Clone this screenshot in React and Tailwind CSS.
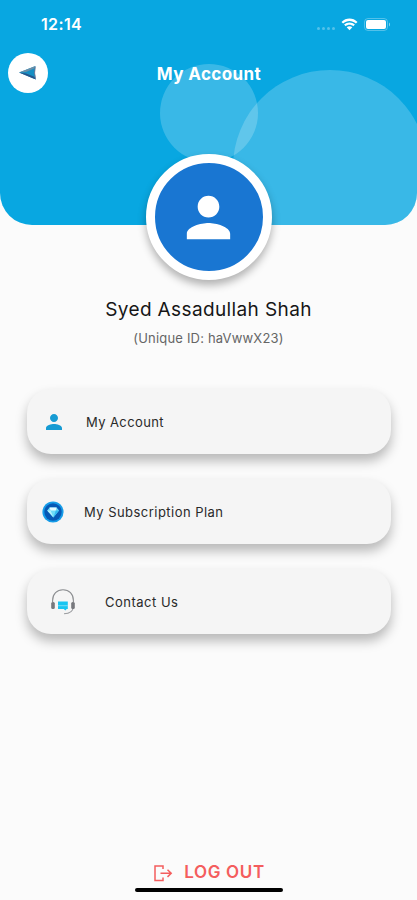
import React from "react";
import { MdPerson } from "react-icons/md";

function SignalDots() {
  return (
    <div className="flex gap-[2px] opacity-30">
      <span className="h-[3px] w-[3px] rounded-full bg-white" />
      <span className="h-[3px] w-[3px] rounded-full bg-white" />
      <span className="h-[3px] w-[3px] rounded-full bg-white" />
      <span className="h-[3px] w-[3px] rounded-full bg-white" />
    </div>
  );
}

function WifiIcon() {
  return (
    <svg width="17" height="13" viewBox="0 0 17 13" fill="white">
      <path d="M0.5 3.9C5 -0.6 12 -0.6 16.5 3.9L14.9 5.5C11.3 2 5.7 2 2.1 5.5Z" />
      <path d="M3.1 6.6C6.1 3.7 10.9 3.7 13.9 6.6L12.3 8.2C10.2 6.2 6.8 6.2 4.7 8.2Z" />
      <path d="M5.7 9.2C7.3 7.8 9.7 7.8 11.3 9.2L8.5 12.3Z" />
    </svg>
  );
}

function BatteryIcon() {
  return (
    <svg width="27" height="13" viewBox="0 0 27 13">
      <rect x="0.5" y="0.5" width="23" height="12" rx="3.5" fill="none" stroke="white" strokeOpacity="0.3" />
      <rect x="2" y="2" width="20" height="9" rx="2" fill="white" />
      <path d="M25 4.5C26.4 5 26.4 8 25 8.5Z" fill="white" fillOpacity="0.5" />
    </svg>
  );
}

function BackArrowIcon() {
  return (
    <svg width="20" height="16" viewBox="0 0 20 16">
      <path d="M1 7.5L17.5 1L16.8 8L17.8 14.5Z" fill="#168fc4" />
      <path d="M1 7.5L17.5 1L16.2 3.5L8 7Z" fill="#6b8fa8" />
      <path d="M1 7.5L17.8 14.5L16.4 11.8L8 8.5Z" fill="#28558a" />
      <path d="M17.2 2L16.6 8L17.5 13.5" fill="none" stroke="#7b718e" strokeWidth="0.8" />
    </svg>
  );
}

function DiamondIcon() {
  return (
    <svg width="22" height="22" viewBox="0 0 22 22">
      <circle cx="11" cy="11" r="10.6" fill="#159ce8" />
      <circle cx="11" cy="11" r="8.7" fill="#0759b5" />
      <path d="M7.6 6.5H14.6L17 9.6L11.4 16.6L5.2 9.6Z" fill="#6edcf8" />
      <path d="M7.6 6.5H14.6L13.8 9.6H8.6Z" fill="#e6fbff" />
      <path d="M5.2 9.6H8.6L11.4 16.6Z" fill="#b5f1fc" />
      <path d="M17 9.6H13.8L11.4 16.6Z" fill="#33baf0" />
    </svg>
  );
}

function HeadsetIcon() {
  return (
    <svg width="26" height="28" viewBox="0 0 26 28" fill="none">
      <path d="M2.6 14V12.5C2.6 6 7 1.8 13 1.8S23.4 6 23.4 12.5V14" stroke="#8b8d90" strokeWidth="1.1" />
      <path d="M23.2 19C23 23 20 25.6 14 25.8" stroke="#9b9da0" strokeWidth="1.1" />
      <rect x="1.2" y="14" width="3.6" height="7" rx="1.5" fill="#77787d" />
      <rect x="21.2" y="14" width="3.6" height="7" rx="1.5" fill="#77787d" />
      <path d="M8 13.5H17.8V21H16.7L15.3 22.5L13.8 21H8Z" fill="#18c5f2" />
      <path d="M8 17.7H18" stroke="#77dcf5" strokeWidth="1" />
    </svg>
  );
}

function LogoutIcon() {
  return (
    <svg width="19" height="17" viewBox="0 0 19 17" fill="none" stroke="#f45d5d" strokeWidth="1.5">
      <path d="M9 4V1H1V15.5H9V12.5" />
      <path d="M6.5 8.3H17M13.5 4.7L17.2 8.3L13.5 11.9" />
    </svg>
  );
}

const menuItems = [
  {
    label: "My Account",
    icon: <MdPerson className="mt-px h-6 w-6 text-[#169bd3]" />,
    className: "gap-5 pl-[15px]",
    textClass: "tracking-[0.4px]",
  },
  {
    label: "My Subscription Plan",
    icon: <DiamondIcon />,
    className: "gap-5 pl-[15px]",
    textClass: "tracking-[0.46px]",
  },
  {
    label: "Contact Us",
    icon: <HeadsetIcon />,
    className: "gap-[29px] pl-[23px]",
    textClass: "tracking-[0.5px]",
  },
];

export default function App() {
  return (
    <div className="relative flex h-[900px] w-full flex-col overflow-hidden bg-[#fbfbfb] font-['Inter',sans-serif]">
      {/* Header */}
      <header className="relative h-[225px] shrink-0 overflow-hidden rounded-b-[32px] bg-[#08a7e1]">
        <div className="absolute left-[160px] top-16 h-[98px] w-[98px] rounded-full bg-white/20" />
        <div className="absolute left-[233px] top-[70px] h-[194px] w-[194px] rounded-full bg-white/20" />

        <div className="relative flex h-12 items-center justify-between pl-[41px] pr-[26px]">
          <span className="text-base font-semibold tracking-[0.35px] text-white">12:14</span>
          <div className="flex items-center">
            <div className="mr-[6px] mt-[9px]">
              <SignalDots />
            </div>
            <WifiIcon />
            <div className="ml-[6px]">
              <BatteryIcon />
            </div>
          </div>
        </div>

        <div className="relative mt-[5px] grid h-10 grid-cols-[40px_1fr_40px] items-center px-2">
          <button className="flex h-10 w-10 items-center justify-center rounded-full bg-white">
            <BackArrowIcon />
          </button>
          <h1 className="pl-px pt-[3px] text-center text-[17px] font-bold tracking-[0.4px] text-white">My Account</h1>
        </div>
      </header>

      {/* Profile */}
      <section className="relative -mt-[71px] flex flex-col items-center">
        <div className="flex h-[126px] w-[126px] items-center justify-center rounded-full border-[9px] border-white bg-[#1976d2] shadow-[0_5px_9px_rgba(0,0,0,0.3)]">
          <MdPerson className="h-[65px] w-[65px] shrink-0 text-white" />
        </div>
        <h2 className="mt-4 text-[19px] leading-7 tracking-[0.38px] text-[#161616]">Syed Assadullah Shah</h2>
        <p className="mt-1 text-[13px] leading-5 tracking-[0.18px] text-[#656565]">(Unique ID: haVwwX23)</p>
      </section>

      {/* Menu */}
      <nav className="ml-[27px] mr-[26px] mt-[41px] flex flex-col gap-[25px]">
        {menuItems.map((item) => (
          <button
            key={item.label}
            className={`flex h-[65px] items-center rounded-[24px] bg-[#f5f5f5] text-[13px] text-[#292929] shadow-[0_7px_12px_rgba(0,0,0,0.27)] ${item.className}`}
          >
            {item.icon}
            <span className={`pt-[2px] ${item.textClass}`}>{item.label}</span>
          </button>
        ))}
      </nav>

      <footer className="mt-auto flex h-[39px] flex-col items-center">
        <button className="flex h-6 items-center gap-[11px] pl-[2px] text-[17px] font-semibold tracking-[0.65px] text-[#f45d5d]">
          <LogoutIcon />
          LOG OUT
        </button>
        <div className="mt-[3px] h-[4px] w-[148px] rounded-full bg-black" />
      </footer>
    </div>
  );
}
